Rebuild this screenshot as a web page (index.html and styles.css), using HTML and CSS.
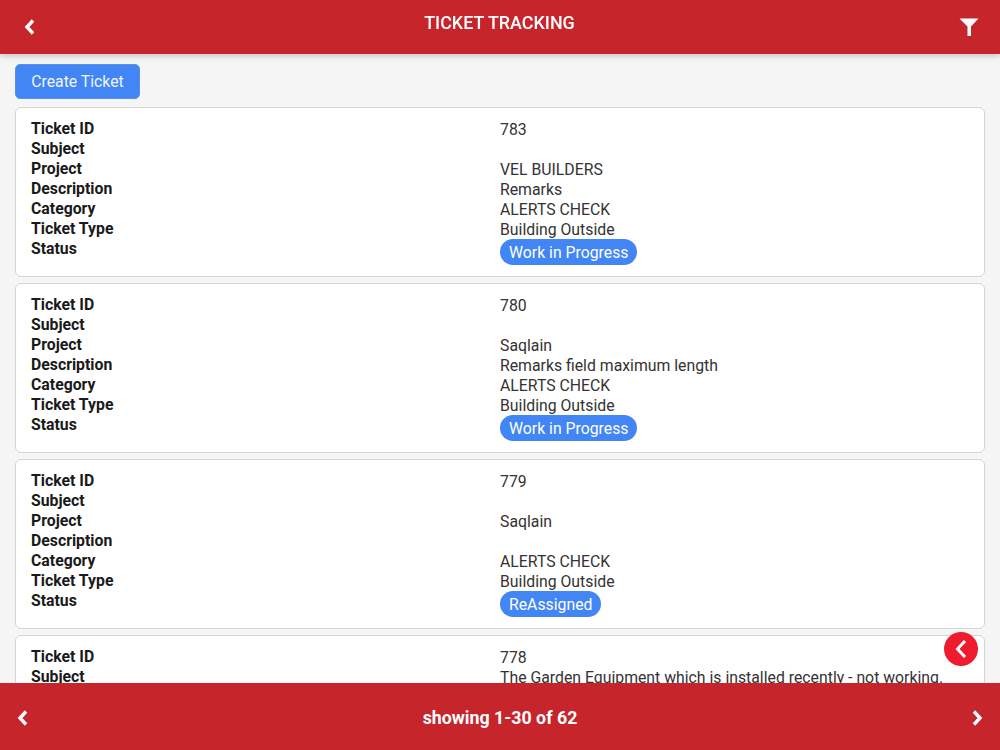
FILE: index.html
```html
<!DOCTYPE html>
<html lang="en">
<head>
  <meta charset="UTF-8">
  <title>Ticket Tracking</title>
  <link rel="stylesheet" href="styles.css">
</head>
<body>

<header class="topbar">
  <svg class="chevron" viewBox="0 0 12 18"><path d="M9.5 2.500 3.500 9l6 6.500"/></svg>
  <h1>TICKET TRACKING</h1>
  <svg class="filter" viewBox="0 0 20 18"><path d="M0.5 0.5h19L12 8.500V18H8.500V8.500z"/></svg>
</header>

<main class="content">
  <button class="create-btn">Create Ticket</button>

  <div class="ticket">
    <div class="labels">
      <div>Ticket ID</div><div>Subject</div><div>Project</div><div>Description</div><div>Category</div><div>Ticket Type</div><div>Status</div>
    </div>
    <div class="values">
      <div>783</div><div></div><div>VEL BUILDERS</div><div>Remarks</div><div>ALERTS CHECK</div><div>Building Outside</div>
      <span class="status">Work in Progress</span>
    </div>
  </div>

  <div class="ticket">
    <div class="labels">
      <div>Ticket ID</div><div>Subject</div><div>Project</div><div>Description</div><div>Category</div><div>Ticket Type</div><div>Status</div>
    </div>
    <div class="values">
      <div>780</div><div></div><div>Saqlain</div><div>Remarks field maximum length</div><div>ALERTS CHECK</div><div>Building Outside</div>
      <span class="status">Work in Progress</span>
    </div>
  </div>

  <div class="ticket">
    <div class="labels">
      <div>Ticket ID</div><div>Subject</div><div>Project</div><div>Description</div><div>Category</div><div>Ticket Type</div><div>Status</div>
    </div>
    <div class="values">
      <div>779</div><div></div><div>Saqlain</div><div></div><div>ALERTS CHECK</div><div>Building Outside</div>
      <span class="status">ReAssigned</span>
    </div>
  </div>

  <div class="ticket">
    <div class="labels">
      <div>Ticket ID</div><div>Subject</div>
    </div>
    <div class="values">
      <div>778</div><div>The Garden Equipment which is installed recently - not working.</div>
    </div>
  </div>
</main>

<button class="fab">
  <svg viewBox="0 0 16 22"><path d="M12 3 4.500 11l7.500 8"/></svg>
</button>

<footer class="bottombar">
  <svg class="chevron" viewBox="0 0 12 18"><path d="M9.500 2.500 3.500 9l6 6.500"/></svg>
  <span>showing 1-30 of 62</span>
  <svg class="chevron" viewBox="0 0 12 18"><path d="M2.500 2.500 8.500 9l-6 6.500"/></svg>
</footer>

</body>
</html>
```
FILE: styles.css
```css
* { box-sizing: border-box; }
html, body { height: 100%; }
body {
  margin: 0;
  overflow: hidden;
  background: #f5f5f5;
  color: #222;
  font-family: Roboto, sans-serif;
  font-size: 15.8px;
  line-height: 20px;
}
.topbar {
  position: fixed;
  top: 0;
  left: 0;
  right: 0;
  height: 54px;
  padding: 0 21px;
  display: flex;
  align-items: center;
  justify-content: space-between;
  background: #c6252c;
  box-shadow: 0 2px 6px rgba(0,0,0,0.2);
  color: #fff;
}
.topbar h1 {
  margin: 0 0 8px 2px;
  font-size: 17.9px;
  font-weight: 500;
}
.chevron {
  width: 17px;
  height: 18px;
  fill: none;
  stroke: #fff;
  stroke-width: 3.4;
}
.filter {
  width: 20px;
  height: 18px;
  fill: #fff;
}
.content {
  padding: 64px 15px 0;
}
.create-btn {
  display: block;
  width: 125px;
  height: 35px;
  margin-bottom: 8px;
  padding: 0;
  border: 1px solid #5a8fe8;
  border-radius: 5px;
  background: #4285f4;
  color: #f0f5ff;
  font-family: inherit;
  font-size: 15.8px;
}
.ticket {
  display: flex;
  margin-bottom: 6px;
  padding: 11px 15px;
  background: #fff;
  border: 1px solid #d4d4d4;
  border-radius: 6px;
}
.labels, .values {
  flex: 1;
}
.labels {
  font-weight: 700;
  color: #1a1a1a;
}
.values {
  padding-top: 1px;
  color: #333;
}
.values div {
  min-height: 20px;
}
.status {
  display: inline-block;
  height: 26px;
  margin-top: -1px;
  padding: 4px 9px 2px;
  border-radius: 13px;
  background: #4285f4;
  color: #fff;
}
.fab {
  position: fixed;
  top: 632px;
  left: 944px;
  width: 34px;
  height: 34px;
  padding: 0;
  display: flex;
  align-items: center;
  justify-content: center;
  border: none;
  border-radius: 50%;
  background: #ed1c2e;
}
.fab svg {
  width: 16px;
  height: 22px;
  fill: none;
  stroke: #fff;
  stroke-width: 3;
}
.bottombar {
  position: fixed;
  left: 0;
  right: 0;
  bottom: 0;
  height: 67px;
  padding: 2px 14px 0;
  display: flex;
  align-items: center;
  justify-content: space-between;
  background: #c6252c;
  color: #fff;
  font-size: 17.8px;
  font-weight: 700;
}
```
